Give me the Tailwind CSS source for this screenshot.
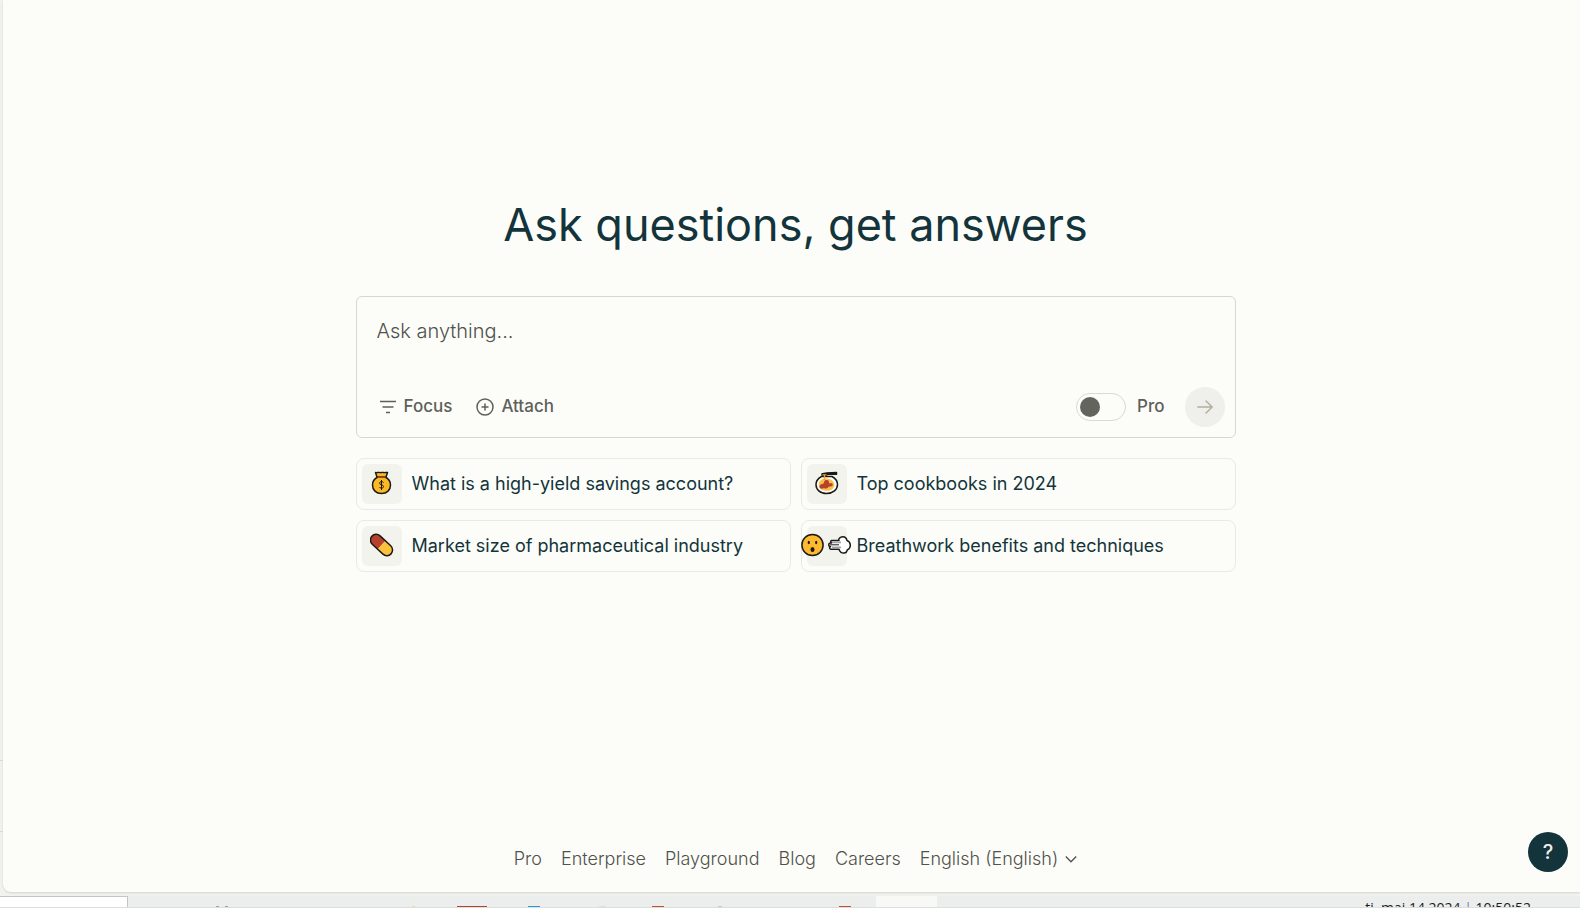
<!DOCTYPE html>
<html lang="en">
<head>
  <meta charset="UTF-8" />
  <meta name="viewport" content="width=device-width, initial-scale=1.0" />
  <title>Ask questions, get answers</title>
  <script src="https://cdn.jsdelivr.net/npm/@tailwindcss/browser@4"></script>
</head>
<body class="h-screen overflow-hidden flex flex-col bg-[#f3f3ee] text-[#13343b] font-['Inter','Liberation_Sans',sans-serif]">
  <div class="flex-1 min-h-0 flex">
    <!-- edge of the sidebar -->
    <div class="w-[3px] flex flex-col justify-end pb-[60px]">
      <div class="h-[72px] border-y border-[#dcdddb]"></div>
    </div>
    <main class="flex-1 pl-2 bg-[#fcfdf8] rounded-bl-lg shadow-sm flex flex-col">
      <section class="w-full max-w-[880px] mx-auto pt-[195px]">
        <h1 class="text-center text-[45px] leading-[60px]">Ask questions, get answers</h1>

        <form class="mt-[41px] h-[142px] border border-[#d6d7cf] rounded-md flex flex-col justify-between pl-5 pr-[10px] pt-5 pb-[10px]" onsubmit="return false">
          <input type="text" aria-label="Ask anything" placeholder="Ask anything..." class="h-7 text-[20px] font-light outline-none placeholder:text-[#50514c]" />
          <div class="flex items-center text-[#5f605b] text-[17px] font-medium">
            <button type="button" class="flex items-center gap-2 pl-[3px]">
              <svg class="w-4 h-4" viewBox="0 0 16 16" fill="none" stroke="currentColor" stroke-width="1.5"><path d="M0 2.5h16M2.5 8h11M6 13.5h4" /></svg>
              Focus
            </button>
            <button type="button" class="flex items-center gap-[7px] ml-6">
              <svg class="w-[18px] h-[18px]" viewBox="0 0 18 18" fill="none" stroke="currentColor" stroke-width="1.5"><circle cx="9" cy="9" r="8" /><path d="M9 5.5v7M5.5 9h7" /></svg>
              Attach
            </button>
            <label for="pro" class="ml-auto flex items-center gap-[11px]">
              <input id="pro" type="checkbox" role="switch" class="appearance-none w-[50px] h-7 rounded-full border border-[#d9dad2] flex items-center pl-[3px] before:block before:w-5 before:h-5 before:rounded-full before:bg-[#64645f]" />
              Pro
            </label>
            <button type="submit" aria-label="Submit" class="ml-5 w-10 h-10 rounded-full bg-[#efefeb] text-[#b5aea3] flex items-center justify-center">
              <svg class="w-4 h-4" viewBox="0 0 16 16" fill="none" stroke="currentColor" stroke-width="1.5" stroke-linecap="round" stroke-linejoin="round"><path d="M.8 8h14.4M9 2l6.200 6L9 14" /></svg>
            </button>
          </div>
        </form>

        <div class="mt-5 grid grid-cols-2 gap-[10px] text-[18px]">
          <button class="h-[52px] border border-[#e9eae4] rounded-lg flex items-center pl-[5px] gap-[10px]">
            <span class="w-10 h-10 rounded-md bg-[#f3f3ee] flex items-center justify-center pb-0.5">
              <svg class="w-6 h-6" viewBox="0 0 24 24" stroke="#1d1a16" stroke-width="1.5" stroke-linejoin="round"><path d="M8 6C4.500 7.500 2.500 10.500 2.500 14c0 5 3.500 8.500 9 8.500s9-3.500 9-8.500c0-3.500-2-6.500-5.500-8z" fill="#fbb926" /><path d="M5.500 1.500l1.500 4.500h9l1.500-4.500c-1.500-.5-2.500.5-4 0s-2.500.5-4 0-2.500.5-4 0z" fill="#fbb926" /><path d="M7.500 6.300h8" stroke="#9a4a1c" /><path d="M13.500 11.800c-.4-.9-1.100-1.200-2-1.200-1.100 0-1.900.5-1.900 1.500 0 2.200 3.900 1.300 3.900 3.500 0 1-.9 1.600-2 1.600-1 0-1.700-.4-2-1.200M11.500 9v10" fill="none" stroke-width="1" /></svg>
            </span>
            <span class="pb-0.5">What is a high-yield savings account?</span>
          </button>
          <button class="h-[52px] border border-[#e9eae4] rounded-lg flex items-center pl-[5px] gap-[10px]">
            <span class="w-10 h-10 rounded-md bg-[#f3f3ee] flex items-center justify-center pb-0.5">
              <svg class="w-6 h-6" viewBox="0 0 24 24" stroke="#1d1a16" stroke-width="1.5" stroke-linejoin="round"><path d="M6.500 5.500h10.500c3.500 2 5.500 4.500 5.500 8 0 5-4.500 9-11 9s-10.500-4-10.500-9c0-3.500 2-6 5.500-8z" fill="#fff" /><path d="M4 15.500c-1-4 1.500-7.500 5.500-8 5-.5 10 2 9.800 6.500-.1 4-3.800 5.800-7.500 5.800-3.500 0-6.800-1.300-7.800-4.300z" fill="#fbc04a" stroke="none" /><path d="M4.500 15c1-2 3-2 4-2.500s0-3 2.500-3.500 3 1 3 2.500 2.500 0 3.500 1.500-1 3-2.500 2.500-2 2-4 2-2-.5-3.500 0-3.500-.5-3-2.500z" fill="#b7412b" stroke="none" /><path d="M7 3c3-1.500 10-1.500 14.500-1.500v1.800H12.500l-2 1.700-3.500-1z" fill="#1d1a16" /><path d="M7.500 3.800h4M9.500 4v5" stroke="#f0a02c" stroke-width="1.200" /></svg>
            </span>
            <span class="pb-0.5">Top cookbooks in 2024</span>
          </button>
          <button class="h-[52px] border border-[#e9eae4] rounded-lg flex items-center pl-[5px] gap-[10px]">
            <span class="w-10 h-10 rounded-md bg-[#f3f3ee] flex items-center justify-center pb-0.5">
              <svg class="w-6 h-6" viewBox="0 0 24 24" stroke="#1d1a16" stroke-width="1.5"><g transform="rotate(43 11.500 12)"><path d="M11.500 6.300H4.500a5.700 5.700 0 0 0 0 11.400h7z" fill="#b7412b" stroke="none" /><path d="M11.500 6.300h7a5.700 5.700 0 0 1 0 11.400h-7z" fill="#fdc03b" stroke="none" /><rect x="-1.500" y="6.300" width="26" height="11.400" rx="5.700" fill="none" /></g></svg>
            </span>
            <span class="pb-0.5">Market size of pharmaceutical industry</span>
          </button>
          <button class="h-[52px] border border-[#e9eae4] rounded-lg flex items-center pl-[5px] gap-[10px]">
            <span class="w-10 h-10 rounded-md bg-[#f3f3ee] flex items-center justify-center pb-0.5 pr-0.5">
              <svg class="w-[50px] h-6 shrink-0" viewBox="0 0 50 24" stroke="#1d1a16" stroke-width="1.5" stroke-linejoin="round"><circle cx="11.500" cy="12" r="10.600" fill="#fdb92f" /><g fill="#1d1a16" stroke="none"><ellipse cx="7.800" cy="9.500" rx="1.100" ry="1.700" /><ellipse cx="15.200" cy="9.500" rx="1.100" ry="1.700" /><ellipse cx="11.500" cy="16.500" rx="2" ry="2.500" /></g><path d="M38 7.500h-7.500a1.400 1.400 0 0 0 0 2.500H29.500a1.400 1.400 0 0 0 0 3.500a1.400 1.400 0 0 0 .5 2.700h8c.5 3 3 4.300 5.500 3.800 1.500-.3 2.500-1.500 2.800-3 2-1 3.200-3 3-5s-1.500-4-3.300-4.500c-.7-2.700-3-4-5.500-3.500-2 .5-3.200 2-2.500 3.500z" fill="#fff" /><path d="M31 9.300h9M31 14.300h9" stroke="#9da5ab" stroke-width="1.800" /><path d="M29 11.800h9" stroke-width="1" /></svg>
            </span>
            <span class="pb-0.5">Breathwork benefits and techniques</span>
          </button>
        </div>
      </section>

      <footer class="mt-auto mb-[21px] flex justify-center gap-[19px] text-[18px] font-light leading-6 text-[#50514c]">
        <a href="#">Pro</a>
        <a href="#">Enterprise</a>
        <a href="#">Playground</a>
        <a href="#">Blog</a>
        <a href="#">Careers</a>
        <button class="flex items-center gap-[7px]">English (English)
          <svg class="w-3 h-3" viewBox="0 0 12 12" fill="none" stroke="currentColor" stroke-width="1.3"><path d="M.8 3.500L6 8.800l5.200-5.300" /></svg>
        </button>
      </footer>
    </main>
  </div>

  <!-- top slice of the taskbar -->
  <div class="h-4 shrink-0 pt-1 border-b border-[#dddfdf]">
    <div class="h-full bg-[#eceeed] flex items-end overflow-hidden">
      <div class="w-32 h-full bg-white border-t border-r border-[#c4c5c4]"></div>
      <div class="ml-[88px] w-3 h-px border-x-3 border-[#a5a5a0]"></div>
      <div class="ml-[184px] w-[3px] h-px bg-[#f8d9a0]"></div>
      <div class="ml-[42px] w-[30px] h-px bg-[#b7412b]"></div>
      <div class="ml-[41px] w-3 h-px bg-[#2f96d8]"></div>
      <div class="ml-[59px] w-[7px] h-px bg-[#dddfdf]"></div>
      <div class="ml-[46px] w-3 h-px bg-[#c0532c]"></div>
      <div class="ml-[54px] w-1 h-px bg-[#c9cabd]"></div>
      <div class="ml-[117px] w-3 h-px bg-[#c0532c]"></div>
      <div class="ml-[25px] w-[61px] h-full bg-[#f8f8f7]"></div>
      <div class="ml-auto mr-[49px] self-start pt-0.5 font-['Open_Sans','Liberation_Sans',sans-serif] text-[14px] leading-5 text-[#1d1d1d] whitespace-nowrap">ti. maj 14 2024 <span class="text-[#6f8296]">|</span> 10:50:52</div>
    </div>
  </div>

  <button aria-label="Help" class="fixed right-3 bottom-9 w-10 h-10 rounded-full bg-[#13343b] text-[#f0efe8] text-[20px] font-medium">?</button>
</body>
</html>
